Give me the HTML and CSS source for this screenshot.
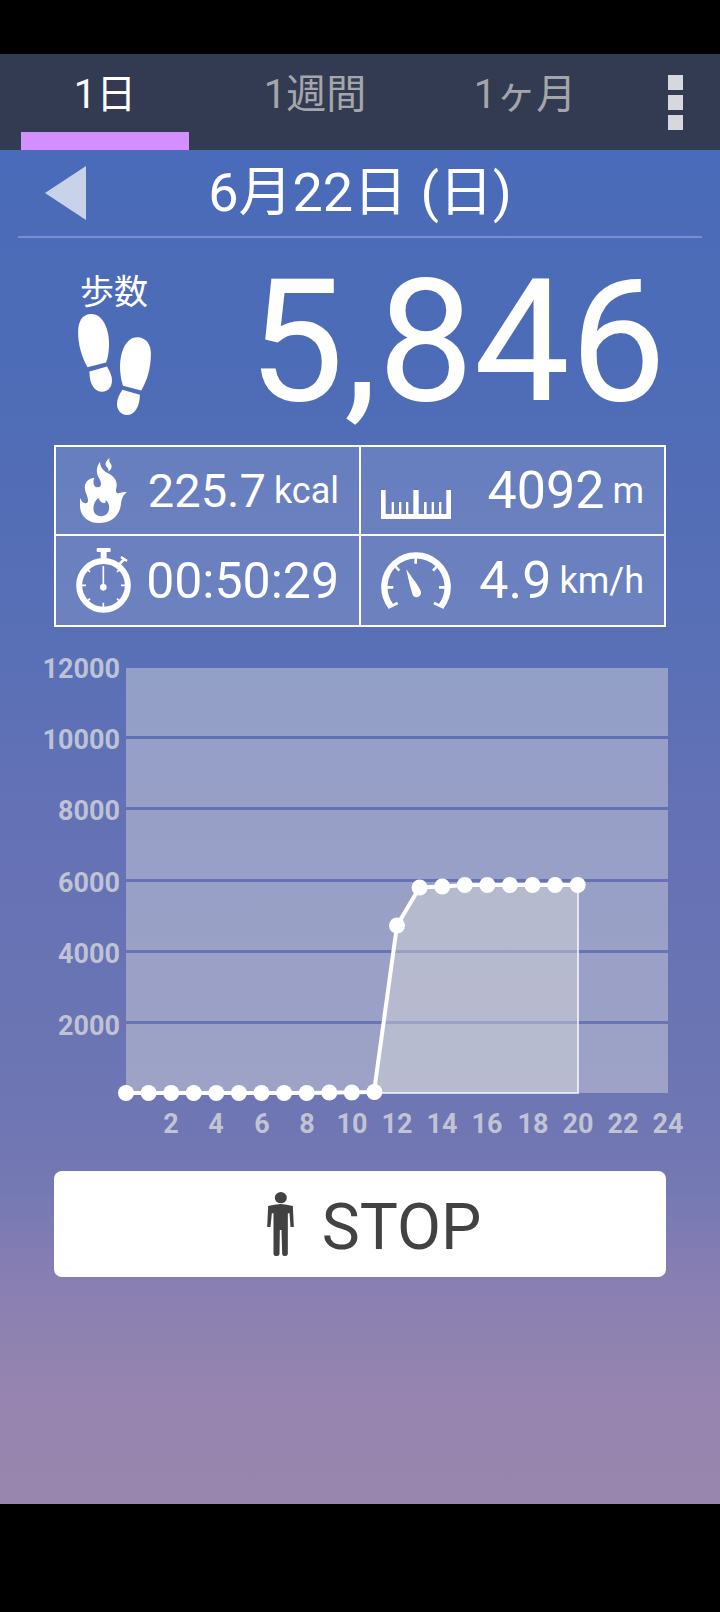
FILE: index.html
```html
<!DOCTYPE html>
<html lang="ja">
<head>
<meta charset="utf-8">
<meta name="viewport" content="width=device-width, initial-scale=1">
<title>歩数計</title>
<link rel="stylesheet" href="styles.css">
</head>
<body class="screen">
  <header class="tabbar">
    <nav class="tabs">
      <button class="tab tab-active" type="button">1日</button>
      <button class="tab" type="button">1週間</button>
      <button class="tab" type="button">1ヶ月</button>
    </nav>
    <button class="menu" type="button" aria-label="メニュー">
      <span class="menu-dot"></span><span class="menu-dot"></span><span class="menu-dot"></span>
    </button>
  </header>

  <main class="content">
    <div class="datebar">
      <button class="prev" type="button" aria-label="前の日">
        <svg class="prev-icon" viewBox="0 0 41 54"><path d="M0 27 41 0V54Z"/></svg>
      </button>
      <h1 class="date">6月22日 (日)</h1>
    </div>

    <section class="steps">
      <div class="steps-side">
        <span class="steps-label">歩数</span>
        <svg class="steps-icon" viewBox="84 161 219 304">
          <path d="M124 161C160 161 177 210 177 250C177 275 173 295 168 307L112 321C95 290 84 255 84 215C84 185 95 161 124 161Z"/>
          <path d="M118 334L171 319C180 335 186 347 186 360C186 382 174 395 156 395C135 395 118 375 118 334Z"/>
          <path d="M262 231C290 231 303 255 303 280C303 325 292 360 274 391L219 377C212 355 210 335 210 315C212 270 230 231 262 231Z"/>
          <path d="M217 389L270 404C269 440 255 465 230 465C213 465 201 450 201 432C201 417 208 403 217 389Z"/>
        </svg>
      </div>
      <span class="steps-count">5,846</span>
    </section>

    <section class="stats">
      <div class="stat">
        <svg class="icon-narrow" viewBox="93 72 141 195">
          <path fill-rule="evenodd" d="M93 192C98 203 104 209 111 208C121 205 117 193 112 180C102 156 108 135 136 131C130 145 134 160 146 160C158 160 158 148 152 136C141 120 140 100 153 84C154 98 160 108 174 116C196 126 204 140 203 155C202 165 198 172 204 177C212 180 222 171 234 175C222 182 218 195 216 210C212 245 188 267 150 267C115 267 93 245 93 215ZM148 192C128 207 126 247 156 247C184 246 187 210 170 198C171 206 168 208 163 207C156 206 152 200 148 192Z"/>
          <path d="M182 72C170 80 166 92 174 100C178 104 180 108 178 113C190 105 190 95 184 88C180 83 180 78 182 72Z"/>
        </svg>
        <span class="value value-s">225.7</span><span class="unit">kcal</span>
      </div>
      <div class="stat">
        <svg class="icon-wide" viewBox="93 81 210 171">
          <path d="M93 165H107V237H125V201H132V237H147V201H154V237H168V201H175V237H190V165H206V237H222V201H230V237H245V201H252V237H267V201H274V237H289V165H303V252H93Z"/>
        </svg>
        <span class="value value-l">4092</span><span class="unit">m</span>
      </div>
      <div class="stat">
        <svg class="icon-narrow" viewBox="75 342 165 195">
          <circle class="line" cx="157.500" cy="454" r="73" stroke-width="18"/>
          <rect x="137" y="342" width="42" height="12" rx="3"/>
          <rect x="149" y="350" width="18" height="24"/>
          <path class="line" stroke-width="8" d="M206 390 219 376M210 369 228 381"/>
          <path class="line" stroke-width="5" d="M157 396V455M90 454H105M210 454H225M157 506V522M108 405 117 414M207 405 198 414M108 503 117 494M207 503 198 494"/>
          <circle cx="157" cy="460" r="10"/>
        </svg>
        <span class="value value-m">00:50:29</span>
      </div>
      <div class="stat">
        <svg class="icon-wide" viewBox="93 351 210 171">
          <path class="line" stroke-width="19" d="M123.500 515A95 95 0 1 1 272.500 515"/>
          <path class="line" stroke-width="8" d="M110 457H130M267 457H286M197 364V386M134 392 148 407M263 392 249 407M115 518 143 504M281 518 252 504"/>
          <path d="M169 403C185 428 205 450 212 468A13 13 0 1 1 188 479C182 460 174 430 169 403Z"/>
        </svg>
        <span class="value value-l">4.9</span><span class="unit">km/h</span>
      </div>
    </section>

    <svg class="chart" viewBox="0 0 720 544" role="img" aria-label="時間ごとの歩数">
      <g class="band">
        <path d="M126 41H668V109H126ZM126 112H668V180H126ZM126 183H668V252H126ZM126 255H668V323H126ZM126 326H668V394H126ZM126 397H668V466H126Z"/>
      </g>
      <path class="area" d="M126 466H374L397 298.500 419.600 260.500 442 259.500 465 258H578V466Z"/>
      <path class="edge" d="M374 466H578V258"/>
      <path class="curve" d="M126 466H307L374 465 397 298.500 419.600 260.500 442 259.500 465 258H578"/>
      <g class="points">
        <circle cx="126" cy="466" r="8"/><circle cx="148.600" cy="466" r="8"/><circle cx="171.200" cy="466" r="8"/><circle cx="193.700" cy="466" r="8"/><circle cx="216.300" cy="466" r="8"/><circle cx="238.900" cy="466" r="8"/><circle cx="261.500" cy="466" r="8"/><circle cx="284.100" cy="466" r="8"/><circle cx="306.700" cy="466" r="8"/><circle cx="329.300" cy="465.500" r="8"/><circle cx="351.800" cy="465.500" r="8"/><circle cx="374.400" cy="465" r="8"/><circle cx="397" cy="298.500" r="8"/><circle cx="419.600" cy="260.500" r="8"/><circle cx="442.200" cy="259.500" r="8"/><circle cx="464.800" cy="258" r="8"/><circle cx="487.300" cy="258" r="8"/><circle cx="509.900" cy="258" r="8"/><circle cx="532.500" cy="258" r="8"/><circle cx="555.100" cy="258" r="8"/><circle cx="577.700" cy="258" r="8"/>
      </g>
      <g class="axis axis-y">
        <text x="120" y="51">12000</text><text x="120" y="122">10000</text><text x="120" y="193">8000</text><text x="120" y="265">6000</text><text x="120" y="336">4000</text><text x="120" y="408">2000</text>
      </g>
      <g class="axis axis-x">
        <text x="171" y="506">2</text><text x="216" y="506">4</text><text x="262" y="506">6</text><text x="307" y="506">8</text><text x="352" y="506">10</text><text x="397" y="506">12</text><text x="442" y="506">14</text><text x="487" y="506">16</text><text x="533" y="506">18</text><text x="578" y="506">20</text><text x="623" y="506">22</text><text x="668" y="506">24</text>
      </g>
    </svg>

    <button class="stop" type="button">
      <svg class="stop-icon" viewBox="51 36 80 192">
        <ellipse cx="92" cy="53" rx="18" ry="17"/>
        <path d="M54 78Q72 73 91 72Q110 73 128 78L131 141H121L118 100H113V222Q112 228 106 228H102Q97 228 96 222L94 150H89L88 222Q87 228 81 228H76Q71 228 70 222V100H65L61 141H51Z"/>
      </svg>
      <span class="stop-label">STOP</span>
    </button>
  </main>
</body>
</html>
```
FILE: styles.css
```css
* {
  box-sizing: border-box;
}

.screen {
  margin: 0;
  min-height: 100vh;
  padding: 54px 0 108px;
  display: flex;
  flex-direction: column;
  background: #000;
  color: #fff;
  font-family: Roboto, "Noto Sans CJK JP", sans-serif;
}

button {
  margin: 0;
  padding: 0;
  border: 0;
  background: none;
  color: inherit;
  font: inherit;
}

svg {
  display: block;
  flex: none;
  fill: currentColor;
}

.line {
  fill: none;
  stroke: currentColor;
}

/* Tabs */
.tabbar {
  display: flex;
  height: 96px;
  background: #323b52;
}

.tabs {
  flex: 7;
  display: flex;
}

.tab {
  flex: 1;
  display: grid;
  grid-template-rows: 1fr 18px;
  justify-items: center;
  align-items: center;
  padding-top: 4px;
  font-size: 40px;
  line-height: 48px;
  color: #a5a6a9;
}

.tab::after {
  content: "";
  width: 80%;
  height: 18px;
}

.tab-active {
  color: #fff;
}

.tab-active::after {
  background: #d48fff;
}

.menu {
  flex: 1;
  display: flex;
  flex-direction: column;
  align-items: center;
  justify-content: center;
  gap: 5px;
}

.menu-dot {
  width: 15px;
  height: 15px;
  background: #d6d8dd;
}

/* Day view */
.content {
  flex: 1;
  display: flex;
  flex-direction: column;
  background: linear-gradient(#4a6bb9 0, #4d6cb7 15%, #526db6 24%, #5970b6 37%, #6471b5 49%, #6974b4 62%, #6f76b3 72%, #7579b3 77%, #8a7fb2 84%, #9083b0 89%, #9784b0 92%, #9986ae 100%);
}

.datebar {
  display: grid;
  grid-template-columns: 96px 1fr 96px;
  align-items: center;
  height: 88px;
  margin: 0 18px;
  border-bottom: 2px solid rgba(255, 255, 255, 0.25);
}

.prev {
  padding-left: 27px;
}

.prev-icon {
  width: 41px;
  height: 54px;
  color: #c8d3ea;
}

.date {
  margin: 0;
  font-size: 54px;
  font-weight: 400;
  line-height: 64px;
  text-align: center;
  white-space: nowrap;
}

.steps {
  display: flex;
  align-items: center;
  justify-content: space-between;
  height: 207px;
  padding: 0 54px;
}

.steps-side {
  width: 120px;
  display: flex;
  flex-direction: column;
  align-items: center;
  padding-top: 3px;
  gap: 2px;
}

.steps-label {
  font-size: 34px;
  line-height: 40px;
}

.steps-icon {
  width: 73px;
  height: 101px;
}

.steps-count {
  font-size: 171px;
  line-height: 200px;
}

.stats {
  display: grid;
  grid-template-columns: 1fr 1fr;
  grid-template-rows: 87px 89px;
  gap: 2px;
  margin: 0 54px;
  border: 2px solid #fff;
  background:
    linear-gradient(#fff, #fff) center / 2px 100% no-repeat,
    linear-gradient(#fff, #fff) 0 87px / 100% 2px no-repeat,
    rgba(255, 255, 255, 0.13);
}

.stat {
  display: flex;
  align-items: center;
  padding: 0 20px;
}

.icon-narrow {
  width: 55px;
  height: 65px;
}

.icon-wide {
  width: 70px;
  height: 57px;
}

.value {
  margin-left: auto;
  line-height: 60px;
}

.value-s {
  font-size: 47px;
}

.value-m {
  font-size: 50px;
}

.value-l {
  font-size: 52px;
}

.unit {
  margin-left: 8px;
  font-size: 36px;
  line-height: 42px;
}

/* Hourly chart */
.chart {
  width: 100%;
}

.band {
  fill: rgba(224, 224, 224, 0.42);
}

.area {
  fill: rgba(218, 218, 218, 0.44);
}

.edge {
  fill: none;
  stroke: rgba(255, 255, 255, 0.7);
  stroke-width: 2;
}

.curve {
  fill: none;
  stroke: #fff;
  stroke-width: 4;
}

.axis {
  fill: rgba(222, 222, 224, 0.75);
  font-size: 27px;
  font-weight: 700;
}

.axis-x {
  text-anchor: middle;
}

.axis-y {
  text-anchor: end;
}

/* Stop button */
.stop {
  display: flex;
  align-items: center;
  justify-content: center;
  gap: 28px;
  height: 106px;
  margin: 0 54px;
  padding-left: 28px;
  border-radius: 8px;
  background: #fff;
  color: #424242;
  font-size: 64px;
  line-height: 76px;
}

.stop-icon {
  width: 27px;
  height: 64px;
}

.stop-label {
  padding-top: 8px;
}
```
